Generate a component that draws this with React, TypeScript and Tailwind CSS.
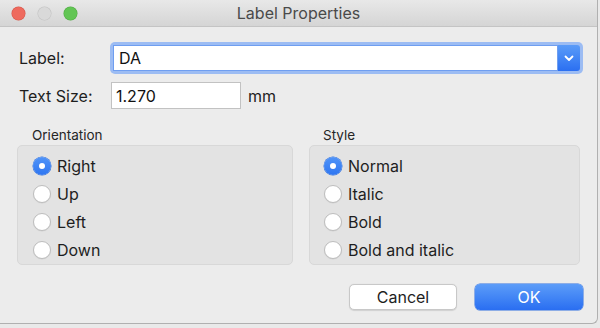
import React from "react";

const font = { fontFamily: '"Inter", "Noto Sans", sans-serif' };

function Radio({ label, checked }: { label: string; checked?: boolean }) {
  return (
    <div className="flex h-[28px] items-center gap-[6px]">
      {checked ? (
        <span className="flex h-[18px] w-[18px] items-center justify-center rounded-full bg-gradient-to-b from-[#4f93f8] to-[#2f76f1] shadow-[0_0_0_0.5px_#2a6de0]">
          <span className="h-[6px] w-[6px] rounded-full bg-white" />
        </span>
      ) : (
        <span className="h-[18px] w-[18px] rounded-full border border-[#bdbdbd] bg-white shadow-[0_0.5px_1px_rgba(0,0,0,0.08)]" />
      )}
      <span className="text-[16px] leading-none text-[#1e1e1e]">{label}</span>
    </div>
  );
}

function Group({ title, items, width, pad }: { title: string; items: string[]; width: string; pad: string }) {
  return (
    <div className={width}>
      <div className={`h-[18px] text-[13.5px] leading-[18px] text-[#262626] ${pad}`}>{title}</div>
      <div className={`mt-[1px] rounded-[5px] border border-[#d8d8d8] bg-[#e3e3e3] pt-[6px] ${pad}`}>
        {items.map((it, i) => (
          <Radio key={it} label={it} checked={i === 0} />
        ))}
      </div>
    </div>
  );
}

export default function App() {
  return (
    <div className="h-[328px] w-[600px] bg-[#e9e9e9]" style={font}>
      <div className="h-[324px] w-[598px] overflow-hidden rounded-br-[6px] border-b border-r border-[#b0b0b0] bg-[#ececec]">
        {/* title bar */}
        <div className="relative flex h-[27px] items-center justify-center border-b border-[#c4c4c4] bg-gradient-to-b from-[#e8e8e8] to-[#d5d5d5]">
          <div className="absolute left-[12px] top-[7px] flex gap-[13px]">
            <span className="h-[13px] w-[13px] rounded-full bg-[#ee6a5e] shadow-[0_0_0_0.5px_#d65549]" />
            <span className="h-[13px] w-[13px] rounded-full bg-[#d9d9d9] shadow-[0_0_0_0.5px_#c2c2c2]" />
            <span className="h-[13px] w-[13px] rounded-full bg-[#62c554] shadow-[0_0_0_0.5px_#50ab43]" />
          </div>
          <span className="text-[16px] leading-none text-[#4a4a4a]">Label Properties</span>
        </div>

        {/* label row */}
        <div className="ml-[19px] mt-[15px] flex h-[32px] items-center">
          <span className="w-[91px] text-[16px] text-[#1e1e1e]">Label:</span>
          <div className="flex h-[32px] w-[473px] rounded-[5px] bg-[#9cbcf3] p-[3px]">
            <div className="flex flex-1 items-center border border-[#6f9ef0] bg-white pl-[5px] text-[16px] text-[#111]">
              DA
            </div>
            <div className="flex w-[22px] items-center justify-center rounded-r-[3px] bg-gradient-to-b from-[#5a9bf8] to-[#2b6ff1]">
              <svg width="10" height="7" viewBox="0 0 10 7">
                <path d="M1.5 1.5 L5 5 L8.5 1.5" fill="none" stroke="white" strokeWidth="1.8" strokeLinecap="round" strokeLinejoin="round" />
              </svg>
            </div>
          </div>
        </div>

        {/* text size row */}
        <div className="ml-[19px] mt-[8px] flex h-[27px] items-center">
          <span className="w-[92px] text-[16px] text-[#1e1e1e]">Text Size:</span>
          <div className="flex h-[27px] w-[130px] items-center border border-[#c2c2c2] bg-white pl-[4px] text-[16px] text-[#111]">
            1.270
          </div>
          <span className="ml-[7px] text-[16px] text-[#1e1e1e]">mm</span>
        </div>

        {/* groups */}
        <div className="ml-[17px] mt-[17px] flex gap-[16px]">
          <Group title="Orientation" items={["Right", "Up", "Left", "Down"]} width="w-[276px]" pad="pl-[15px]" />
          <Group title="Style" items={["Normal", "Italic", "Bold", "Bold and italic"]} width="w-[271px]" pad="pl-[14px]" />
        </div>

        {/* buttons */}
        <div className="mr-[14px] mt-[19px] flex justify-end gap-[18px]">
          <button className="h-[26px] w-[108px] rounded-[5px] border border-[#c8c8c8] bg-white text-[16px] text-[#1e1e1e] shadow-[0_0.5px_1px_rgba(0,0,0,0.12)]">
            Cancel
          </button>
          <button className="h-[26px] w-[108px] rounded-[5px] bg-gradient-to-b from-[#5c9cf8] to-[#2a6ef1] text-[16px] text-white shadow-[0_0_0_0.5px_#2f6fe0]">
            OK
          </button>
        </div>
      </div>
    </div>
  );
}
